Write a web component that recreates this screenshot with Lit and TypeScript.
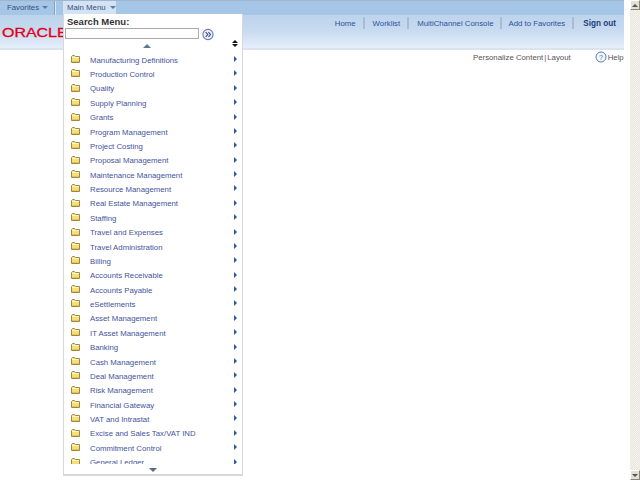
import { LitElement, html, css, svg } from "lit";
import { customElement } from "lit/decorators.js";

const ITEMS = [
  "Manufacturing Definitions", "Production Control", "Quality", "Supply Planning", "Grants",
  "Program Management", "Project Costing", "Proposal Management", "Maintenance Management",
  "Resource Management", "Real Estate Management", "Staffing", "Travel and Expenses",
  "Travel Administration", "Billing", "Accounts Receivable", "Accounts Payable", "eSettlements",
  "Asset Management", "IT Asset Management", "Banking", "Cash Management", "Deal Management",
  "Risk Management", "Financial Gateway", "VAT and Intrastat", "Excise and Sales Tax/VAT IND",
  "Commitment Control", "General Ledger",
];

const folder = svg`<svg class="folder" width="9" height="8" viewBox="0 0 9 8">
  <path d="M0.5 1.5 L0.5 7.5 L8.5 7.5 L8.5 1.5 L4.5 1.5 L3.5 0.5 L1.5 0.5 Z" fill="#f8de78" stroke="#9a8a4a" stroke-width="1"/>
  <rect x="1" y="2" width="7" height="1" fill="#fff6c0"/>
  <rect x="1" y="6" width="7" height="1" fill="#e8c44a"/>
</svg>`;

@customElement("app-root")
export class AppRoot extends LitElement {
  static styles = css`
    :host { display: flex; width: 640px; height: 480px; font-family: "Liberation Sans", Arial, sans-serif; overflow: hidden; background: #fff; position: relative; }
    .page { width: 624px; height: 480px; flex: none; overflow: hidden; }
    .gap { width: 6px; flex: none; }
    .topbar { height: 15px; box-sizing: border-box; background: #a6c6e8; border-top: 1px solid #9fb6cc; display: flex; align-items: stretch; }
    .tab { font-size: 7.8px; color: #35507a; display: flex; align-items: center; gap: 3px; white-space: nowrap; }
    .fav { width: 55px; box-sizing: border-box; padding: 0 0 2px 7px; border-right: 1px solid #7fa0c4; box-shadow: 1px 0 #dce8f4; height: 14px; }
    .caret { width: 0; height: 0; border-left: 3px solid transparent; border-right: 3px solid transparent; border-top: 3px solid #5a7aa0; }
    .head { height: 33px; background: linear-gradient(#bcd4ec 0%, #c6daf0 45%, #e6eefa 100%); border-bottom: 2px solid #dde3ec; display: flex; position: relative; }
    .logo { width: 63px; overflow: hidden; flex: none; padding: 13px 0 0 2px; box-sizing: border-box; }
    .logo span { display: block; color: #e2001a; font-size: 12px; line-height: 11px; -webkit-text-stroke: 0.3px #e2001a; transform: scaleX(1.33); transform-origin: left; white-space: nowrap; }
    .nav { margin-left: auto; display: flex; align-items: flex-start; padding: 1px 8px 0 0; font-size: 7.8px; color: #31509a; white-space: nowrap; }
    .nav a { display: flex; align-items: center; height: 12px; padding: 0 7px 0 8px; margin-top: 1px; border-right: 2px solid #a9bcd0; }
    .nav a.add { padding-left: 6px; }
    .nav a:last-child { border: none; padding: 0 0 0 9px; font-weight: bold; font-size: 8.2px; color: #1c3c78; }
    .sub { display: flex; font-size: 7.8px; color: #555; padding-left: 473px; height: 14px; align-items: center; white-space: nowrap; }
    .sub .bar { color: #8a2a8a; margin: 0 1px; }
    .help { display: flex; align-items: center; margin-left: 24px; gap: 1px; color: #555; }
    .menu { position: absolute; left: 63px; top: 14px; width: 180px; height: 462px; box-sizing: border-box; background: #fff; border: 1px solid #d8d8d8; border-top: none; border-bottom: 2px solid #d8d8d8; overflow: hidden; }
    .mainlabel { position: absolute; left: 63px; top: 1px; height: 13px; width: 53px; background: #d3e3f4; font-size: 7.8px; color: #33507a; display: flex; align-items: center; gap: 4px; padding-left: 4px; box-sizing: border-box; white-space: nowrap; }
    .title { font-size: 9.5px; font-weight: bold; color: #333; padding: 2px 0 0 3px; line-height: 12px; }
    .search { display: flex; align-items: flex-start; gap: 3px; height: 14px; padding-left: 1px; }
    .input { width: 132px; height: 9px; background: #fff; border: 1px solid #aaa; }
    .tri { height: 9px; position: relative; }
    .up { position: absolute; left: 79px; top: 2px; width: 0; height: 0; border-left: 4px solid transparent; border-right: 4px solid transparent; border-bottom: 4px solid #5a7a94; }
    .sort { position: absolute; right: 4px; top: -2px; display: flex; flex-direction: column; gap: 1px; }
    .sort i { width: 0; height: 0; border-left: 3px solid transparent; border-right: 3px solid transparent; }
    .sort i:first-child { border-bottom: 3px solid #111; }
    .sort i:last-child { border-top: 3px solid #111; }
    .list { display: flex; flex-direction: column; padding-top: 2px; }
    .row { height: 14.375px; flex: none; display: flex; align-items: center; position: relative; font-size: 7.8px; color: #44549c; white-space: nowrap; }
    .folder { position: absolute; left: 7px; top: 2px; }
    .label { margin-left: 26px; }
    .arr { position: absolute; right: 5px; top: 3px; width: 0; height: 0; border-top: 3px solid transparent; border-bottom: 3px solid transparent; border-left: 3px solid #2a5a9a; }
    .foot { position: absolute; left: 0; right: 0; bottom: 0; height: 10px; background: #fff; }
    .down { position: absolute; left: 85px; top: 4px; width: 0; height: 0; border-left: 4px solid transparent; border-right: 4px solid transparent; border-top: 4px solid #5a6a84; }
    .scroll { width: 10px; height: 480px; flex: none; display: flex; flex-direction: column; justify-content: space-between; background-color: #f1efe6; background-image: conic-gradient(#e8e6dc 25%, #f6f4ee 0 50%, #e8e6dc 0 75%, #f6f4ee 0); background-size: 2px 2px; }
    .sbtn { height: 10px; background: #e2dfd4; border: 1px solid; border-color: #fff #8a887c #8a887c #fff; box-sizing: border-box; display: flex; align-items: center; justify-content: center; }
    .sbtn i { width: 0; height: 0; border-left: 3px solid transparent; border-right: 3px solid transparent; }
    .su i { border-bottom: 3px solid #555; }
    .sd i { border-top: 3px solid #555; }
  `;

  render() {
    return html`
      <div class="page">
        <div class="topbar"><div class="tab fav">Favorites <span class="caret"></span></div></div>
        <div class="head">
          <div class="logo"><span>ORACLE</span></div>
          <div class="nav">
            <a>Home</a><a>Worklist</a><a>MultiChannel Console</a><a class="add">Add to Favorites</a><a>Sign out</a>
          </div>
        </div>
        <div class="sub">
          <span>Personalize Content</span><span class="bar">|</span><span>Layout</span>
          <span class="help">
            <svg width="12" height="12" viewBox="0 0 12 12"><circle cx="6" cy="6" r="5" fill="#f4f8fc" stroke="#5a7ab0"/><text x="6" y="8.5" font-size="7" text-anchor="middle" fill="#4a6aa0" font-family="Liberation Sans">?</text></svg>
            Help
          </span>
        </div>
      </div>
      <div class="gap"></div>
      <div class="menu">
        <div class="title">Search Menu:</div>
        <div class="search">
          <div class="input"></div>
          <svg width="12" height="13" viewBox="0 0 13 14"><circle cx="6.5" cy="7" r="5.5" fill="#eef2f8" stroke="#6a7fa6" stroke-width="1.2"/><path d="M4 4.5 L6.2 7 L4 9.5 M7 4.5 L9.2 7 L7 9.5" fill="none" stroke="#2f4a94" stroke-width="1.2"/></svg>
        </div>
        <div class="tri"><span class="up"></span><span class="sort"><i></i><i></i></span></div>
        <div class="list">
          ${ITEMS.map((t) => html`<div class="row">${folder}<span class="label">${t}</span><span class="arr"></span></div>`)}
        </div>
        <div class="foot"><span class="down"></span></div>
      </div>
      <div class="mainlabel">Main Menu <span class="caret"></span></div>
      <div class="scroll">
        <div class="sbtn su"><i></i></div>
        <div class="sbtn sd"><i></i></div>
      </div>
    `;
  }
}
